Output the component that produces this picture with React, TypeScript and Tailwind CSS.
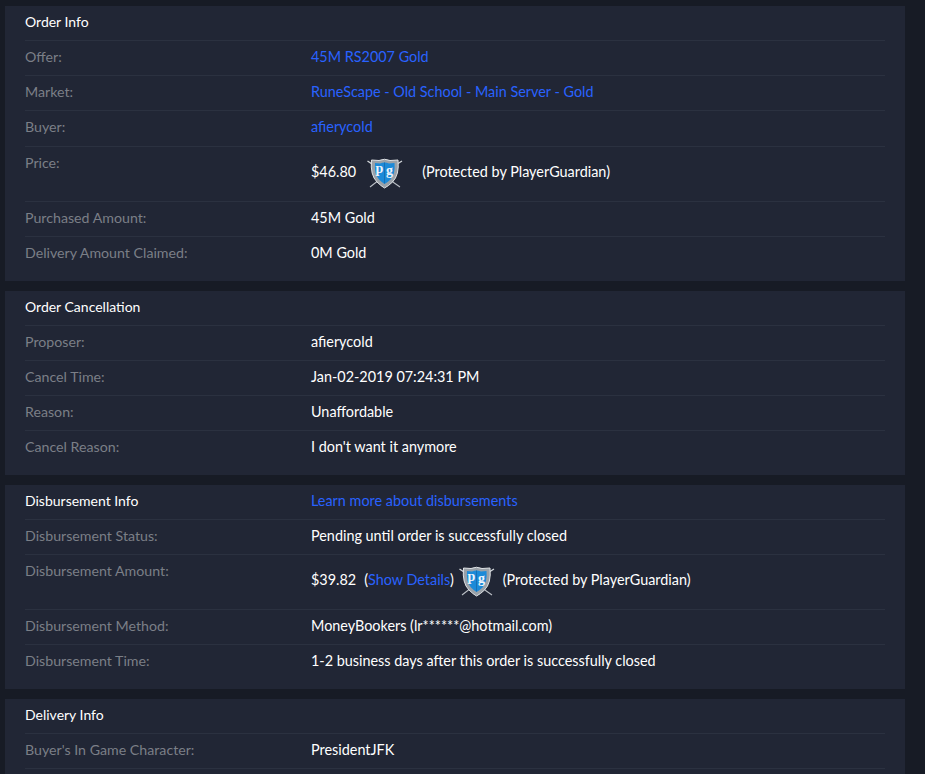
import React from "react";

const Shield = () => (
  <svg width="38" height="38" viewBox="0 0 38 38" className="shrink-0">
    <path d="M1.5 8 L9 13 M36 8 L28 13" stroke="#d3d7db" strokeWidth="1.4" />
    <path d="M4 34 L13 27 M34 34 L24 27" stroke="#b9bec4" strokeWidth="1.1" />
    <path d="M5.5 7 L13 7.5 Q18.5 5 24 7.5 L32 7 Q33.5 22 26.5 29 Q22.5 33 18.5 35 Q15 33 11 29 Q4 22 5.5 7 Z" fill="#9aa1a8" stroke="#dfe2e5" strokeWidth="1" />
    <path d="M9 10 L14 10.5 Q18.5 8.5 23 10.5 L28.5 10 Q29.5 21 24.5 26.5 Q21.5 29.5 18.5 31 Q16 29.5 13 26.5 Q8 21 9 10 Z" fill="#1c8ad8" />
    <path d="M18 9.5 L19 9.5 L19 30.5 L18 30.5 Z" fill="#1770b4" />
    <text x="13.5" y="20" fontSize="14" fontWeight="700" fill="#eef5fb" fontFamily="Liberation Serif, serif" textAnchor="middle">p</text>
    <text x="23.5" y="22" fontSize="14" fontWeight="700" fill="#eef5fb" fontFamily="Liberation Serif, serif" textAnchor="middle">g</text>
  </svg>
);

const Link = ({ children }: { children: React.ReactNode }) => (
  <a className="text-[#2962ff]">{children}</a>
);

const Row = ({ label, children, height = "h-[35px]" }: { label: string; children: React.ReactNode; height?: string }) => (
  <div className={`flex border-t border-[#2b3140] ${height} pt-[6px]`}>
    <div className="w-[286px] shrink-0 text-[14.2px] text-[#7b7f87]">{label}</div>
    <div className="text-[14.4px] text-white">{children}</div>
  </div>
);

const Card = ({ title, right, children }: { title: string; right?: React.ReactNode; children: React.ReactNode }) => (
  <div className="bg-[#212635] px-5 pb-[10px] mb-[10px]">
    <div className="flex h-[34px] pt-[6px] text-white">
      <div className="w-[286px] shrink-0">{title}</div>
      {right}
    </div>
    {children}
  </div>
);

export default function App() {
  return (
    <div className="h-[774px] overflow-hidden bg-[#171b25] pl-[5px] pr-5 pt-[6px] text-sm font-['Lato',sans-serif]">
      <Card title="Order Info">
        <Row label="Offer:"><Link>45M RS2007 Gold</Link></Row>
        <Row label="Market:"><Link>RuneScape - Old School - Main Server - Gold</Link></Row>
        <Row label="Buyer:" height="h-[36px]"><Link>afierycold</Link></Row>
        <Row label="Price:" height="h-[55px]">
          <div className="flex items-center">
            <span>$46.80</span>
            <span className="ml-[10px]"><Shield /></span>
            <span className="ml-[18px]">(Protected by PlayerGuardian)</span>
          </div>
        </Row>
        <Row label="Purchased Amount:">45M Gold</Row>
        <Row label="Delivery Amount Claimed:">0M Gold</Row>
      </Card>
      <Card title="Order Cancellation">
        <Row label="Proposer:">afierycold</Row>
        <Row label="Cancel Time:">Jan-02-2019 07:24:31 PM</Row>
        <Row label="Reason:">Unaffordable</Row>
        <Row label="Cancel Reason:">I don't want it anymore</Row>
      </Card>
      <Card title="Disbursement Info" right={<span className="text-[14.4px]"><Link>Learn more about disbursements</Link></span>}>
        <Row label="Disbursement Status:">Pending until order is successfully closed</Row>
        <Row label="Disbursement Amount:" height="h-[55px]">
          <div className="flex items-center">
            <span>$39.82</span>
            <span className="ml-2">(<Link>Show Details</Link>)</span>
            <span className="ml-1"><Shield /></span>
            <span className="ml-[7px]">(Protected by PlayerGuardian)</span>
          </div>
        </Row>
        <Row label="Disbursement Method:">MoneyBookers (lr******@hotmail.com)</Row>
        <Row label="Disbursement Time:">1-2 business days after this order is successfully closed</Row>
      </Card>
      <Card title="Delivery Info">
        <Row label="Buyer's In Game Character:">PresidentJFK</Row>
        <Row label=""> </Row>
      </Card>
    </div>
  );
}
